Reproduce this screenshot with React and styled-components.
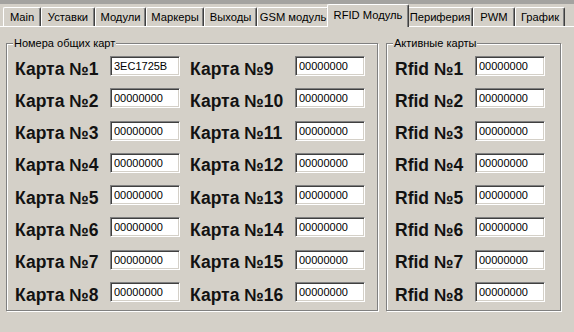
import React from "react";
import styled, { createGlobalStyle } from "styled-components";

const Global = createGlobalStyle`
  html, body { margin: 0; padding: 0; background: #d4d0c8; }
  body { font-family: "Liberation Sans", Arial, sans-serif; }
`;

const Window = styled.div`
  width: 574px;
  height: 332px;
  overflow: hidden;
  background: #d4d0c8;
  display: flex;
  flex-direction: column;
`;

const TopStrip = styled.div`
  height: 4px;
  background: #a4a3a0;
  flex: none;
`;

const TabBar = styled.div`
  height: 22px;
  flex: none;
  display: flex;
  align-items: flex-end;
  padding-left: 3px;
  border-bottom: 1px solid #fff;
`;

const Tab = styled.div`
  box-sizing: border-box;
  width: ${(p) => p.$w}px;
  height: ${(p) => (p.$active ? 23 : 19)}px;
  margin: ${(p) => (p.$active ? "0 -2px -1px -2px" : "0")};
  position: relative;
  z-index: ${(p) => (p.$active ? 1 : 0)};
  display: flex;
  justify-content: center;
  align-items: ${(p) => (p.$active ? "flex-start" : "center")};
  padding-top: ${(p) => (p.$active ? "4px" : "1px")};
  background: #d4d0c8;
  border-top: 1px solid #fff;
  border-left: 1px solid #fff;
  border-right: 1px solid #404040;
  box-shadow: inset -1px 0 0 #808080;
  border-radius: 2px 2px 0 0;
  font-size: 11.2px;
  line-height: 13px;
  color: #000;
  white-space: nowrap;
`;

const Content = styled.div`
  display: flex;
  align-items: flex-start;
  gap: 8px;
  padding: 10px 0 0 6px;
`;

const Group = styled.fieldset`
  box-sizing: border-box;
  width: ${(p) => p.$w}px;
  margin: 0;
  padding: 6px ${(p) => p.$pr}px 8px 8px;
  border: 1px solid #808080;
  box-shadow: inset 1px 1px 0 #fff, 1px 1px 0 #fff;
  min-width: 0;
`;

const Legend = styled.legend`
  margin-left: -2px;
  padding: 0 1px;
  font-size: 11px;
  line-height: 13px;
  color: #000;
  background: #d4d0c8;
`;

const Columns = styled.div`
  display: flex;
  gap: 10px;
`;

const Column = styled.div`
  display: grid;
  grid-template-columns: ${(p) => p.$label}px 70px;
  grid-auto-rows: 20px;
  row-gap: 12.3px;
  align-items: center;
`;

const Label = styled.div`
  font-weight: bold;
  font-size: 17.5px;
  line-height: 20px;
  color: #121212;
  white-space: nowrap;
  margin-top: 5px;
`;

const Field = styled.input`
  box-sizing: border-box;
  width: 70px;
  height: 20px;
  margin: 0;
  padding: 0 0 0 3px;
  background: #fff;
  border-style: solid;
  border-width: 1px;
  border-color: #808080 #fff #fff #808080;
  box-shadow: inset 1px 1px 0 #404040, inset -1px -1px 0 #d4d0c8;
  font-family: "Liberation Sans", Arial, sans-serif;
  font-size: 11px;
  color: #000;
  outline: none;
`;

const tabs = [
  ["Main", 38],
  ["Уставки", 54],
  ["Модули", 51],
  ["Маркеры", 58],
  ["Выходы", 53],
  ["GSM модуль", 72],
  ["RFID Модуль", 82, true],
  ["Периферия", 66],
  ["PWM", 42],
  ["График", 50],
];

const cards = Array.from({ length: 16 }, (_, i) => ({
  name: `Карта №${i + 1}`,
  value: i === 0 ? "3EC1725B" : "00000000",
}));

const FieldList = ({ items, label }) => (
  <Column $label={label}>
    {items.map((it) => (
      <React.Fragment key={it.name}>
        <Label>{it.name}</Label>
        <Field defaultValue={it.value} readOnly />
      </React.Fragment>
    ))}
  </Column>
);

export default function App() {
  const rfids = Array.from({ length: 8 }, (_, i) => ({
    name: `Rfid №${i + 1}`,
    value: "00000000",
  }));
  return (
    <>
      <Global />
      <Window>
        <TopStrip />
        <TabBar>
          {tabs.map(([t, w, a]) => (
            <Tab key={t} $w={w} $active={a}>
              {t}
            </Tab>
          ))}
        </TabBar>
        <Content>
          <Group $w={372} $pr={11}>
            <Legend>Номера общих карт</Legend>
            <Columns>
              <FieldList items={cards.slice(0, 8)} label={95} />
              <FieldList items={cards.slice(8)} label={105} />
            </Columns>
          </Group>
          <Group $w={175} $pr={14}>
            <Legend>Активные карты</Legend>
            <FieldList items={rfids} label={80} />
          </Group>
        </Content>
      </Window>
    </>
  );
}
